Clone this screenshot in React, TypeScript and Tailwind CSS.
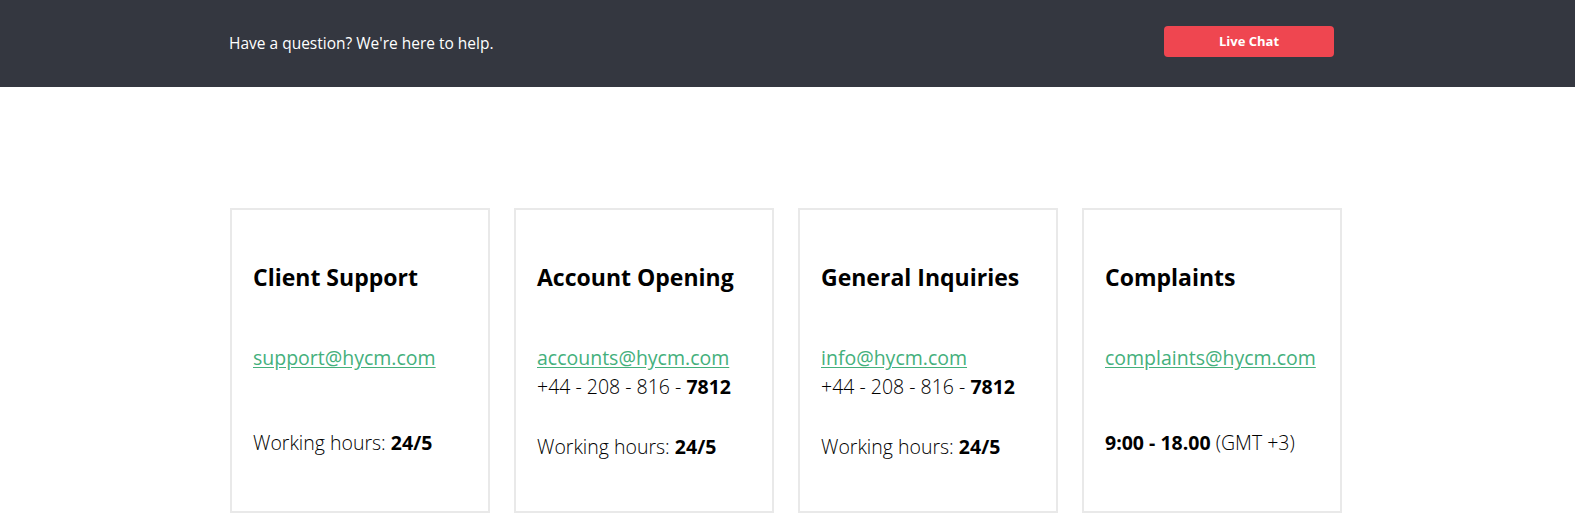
const cards = [
  {
    title: "Client Support",
    email: "support@hycm.com",
    phone: null as string | null,
    hours: "hours",
  },
  {
    title: "Account Opening",
    email: "accounts@hycm.com",
    phone: "7812",
    hours: "hours",
  },
  {
    title: "General Inquiries",
    email: "info@hycm.com",
    phone: "7812",
    hours: "hours",
  },
  {
    title: "Complaints",
    email: "complaints@hycm.com",
    phone: null as string | null,
    hours: "gmt",
  },
];

export default function App() {
  return (
    <div className="min-h-[520px] bg-white font-['Open_Sans',sans-serif] text-black">
      <header className="h-[87px] bg-[#343740]">
        <div className="ml-[229px] flex h-full w-[1105px] items-center justify-between">
          <p className="text-[15.5px] text-white">Have a question? We're here to help.</p>
          <button className="mb-[4px] h-[31px] w-[170px] shrink-0 rounded-[4px] bg-[#ef4650] text-[13px] font-bold text-white">
            Live Chat
          </button>
        </div>
      </header>

      <section className="ml-[230px] mt-[121px] flex w-[1112px] gap-[24px]">
        {cards.map((card) => (
          <article
            key={card.title}
            className="h-[305px] w-[260px] shrink-0 border-2 border-[#e9e9e9] px-[21px] pt-[53px]"
          >
            <h2 className="text-[23px] leading-[28px] font-bold">{card.title}</h2>
            <div className="mt-[52px] text-[19.5px] leading-[29px] font-light">
              <a href="#" className="block font-normal text-[#44b07c] underline underline-offset-2">
                {card.email}
              </a>
              {card.phone && (
                <p>
                  +44 - 208 - 816 - <span className="font-bold">{card.phone}</span>
                </p>
              )}
            </div>
            <p
              className={`text-[19.5px] leading-[29px] font-light ${
                card.phone ? "mt-[31px]" : "mt-[56px]"
              }`}
            >
              {card.hours === "hours" ? (
                <>
                  Working hours: <span className="font-bold">24/5</span>
                </>
              ) : (
                <>
                  <span className="font-bold">9:00 - 18.00</span> (GMT +3)
                </>
              )}
            </p>
          </article>
        ))}
      </section>
    </div>
  );
}
